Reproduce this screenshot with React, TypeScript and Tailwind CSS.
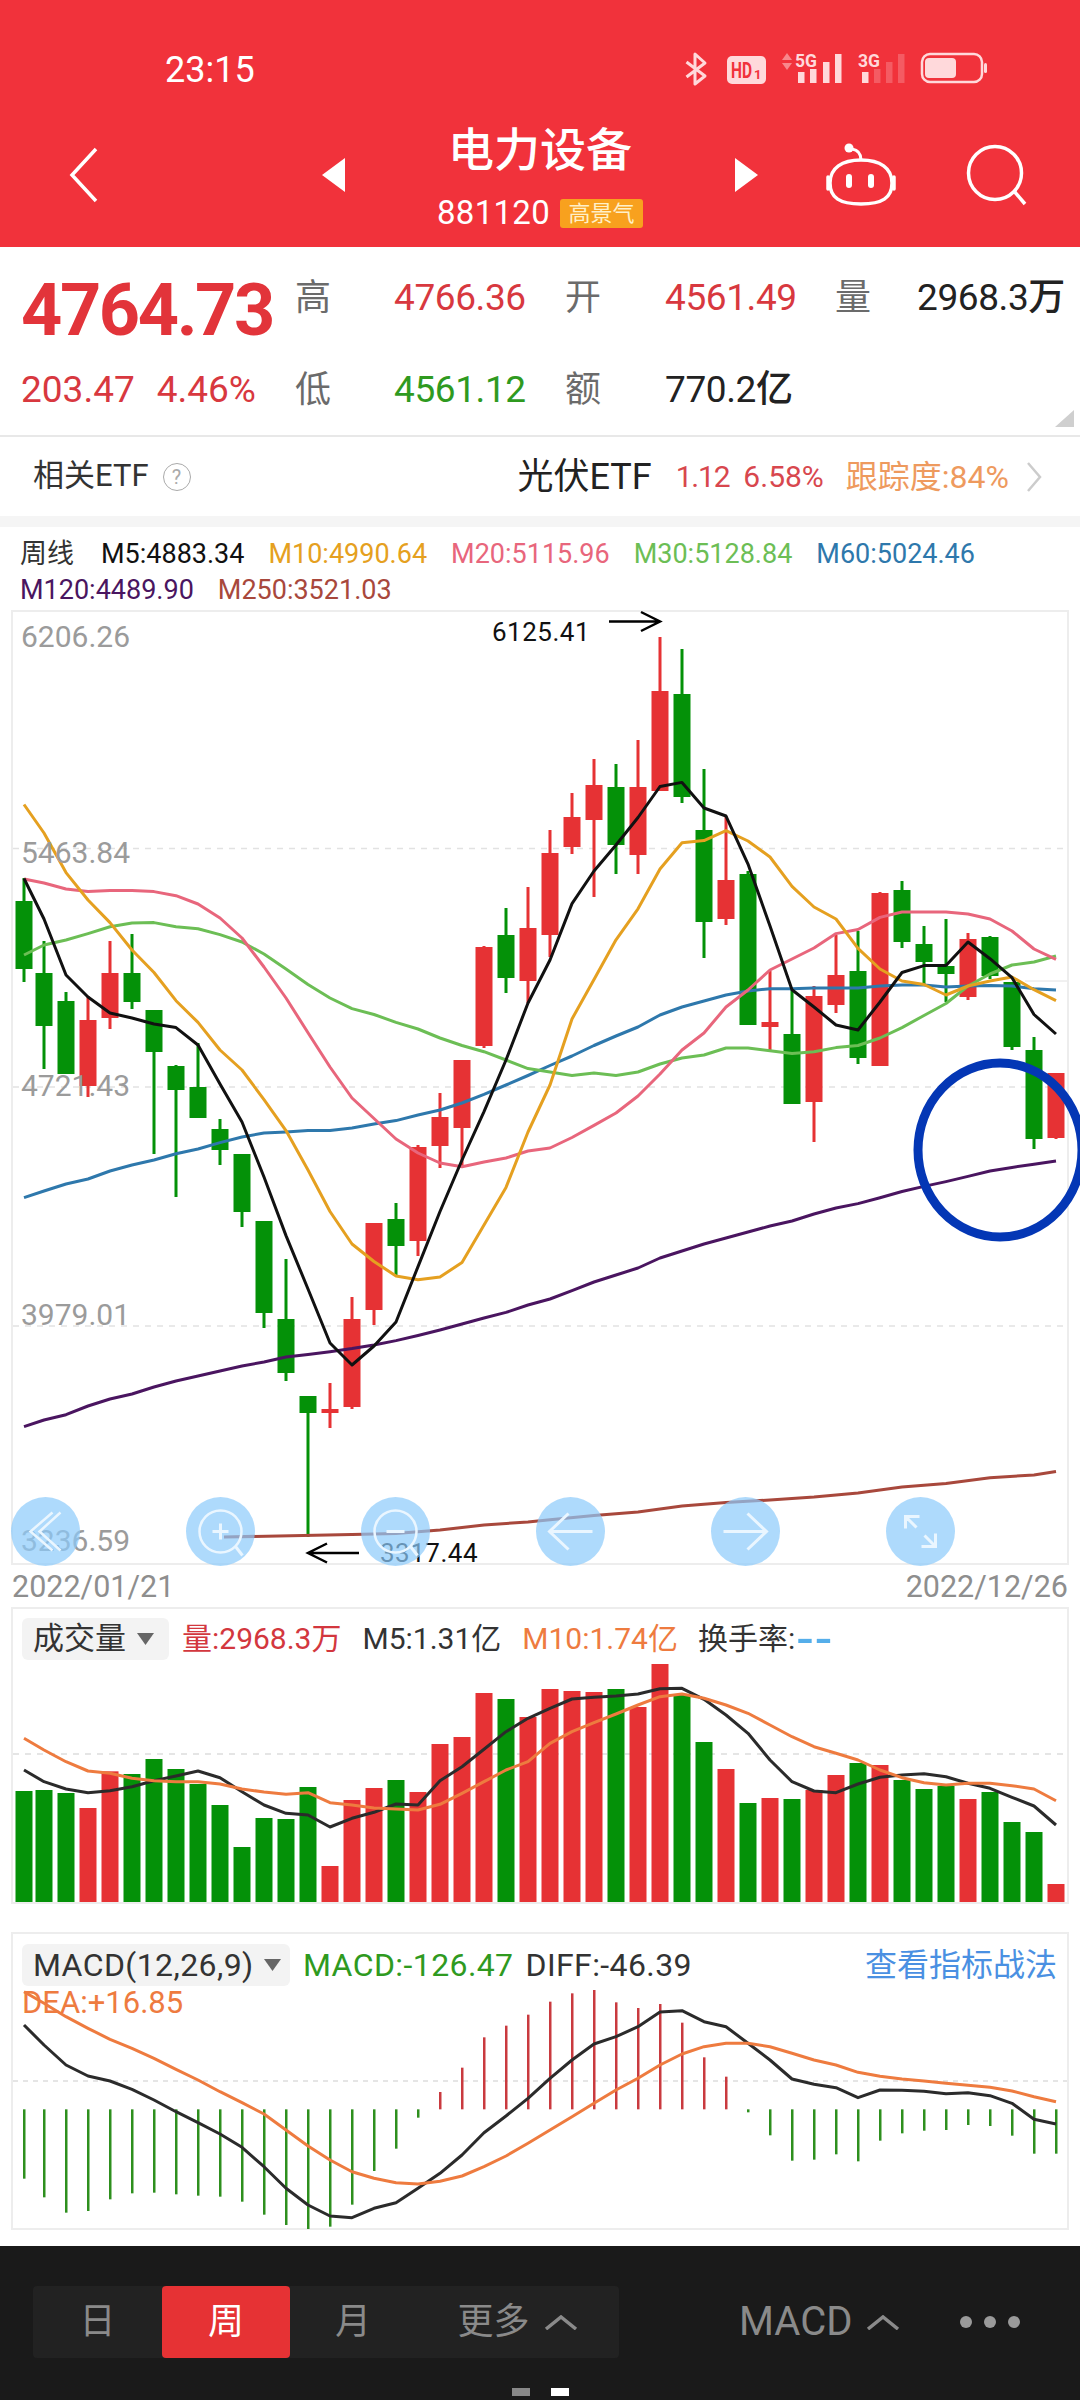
const RED = "#E63234";
const GREEN = "#049108";

const xAt = (i: number) => (i === 0 ? 24 : 44 + (i - 1) * 22);

// wick top, body top, body bottom, wick bottom, red?
const candles: [number, number, number, number, number][] = [
  [878, 901, 969, 982, 0], [941, 973, 1026, 1069, 0], [992, 1001, 1074, 1074, 0], [996, 1020, 1086, 1097, 1],
  [941, 973, 1018, 1029, 1], [934, 973, 1002, 1009, 0], [1010, 1010, 1052, 1154, 0], [1065, 1066, 1090, 1197, 0],
  [1043, 1087, 1118, 1118, 0], [1119, 1129, 1150, 1165, 0], [1154, 1154, 1212, 1227, 0], [1221, 1221, 1313, 1328, 0],
  [1259, 1319, 1373, 1381, 0], [1396, 1396, 1413, 1537, 0], [1383, 1409, 1413, 1428, 1], [1297, 1319, 1407, 1409, 1],
  [1223, 1223, 1310, 1325, 1], [1203, 1219, 1246, 1275, 0], [1145, 1147, 1241, 1256, 1], [1093, 1117, 1146, 1168, 1],
  [1060, 1060, 1128, 1166, 1], [946, 947, 1046, 1048, 1], [908, 935, 978, 993, 0], [887, 928, 981, 1003, 1],
  [830, 853, 935, 957, 1], [793, 817, 847, 854, 1], [759, 785, 820, 897, 1], [764, 787, 845, 874, 0],
  [740, 787, 855, 874, 1], [637, 691, 791, 791, 1], [649, 694, 797, 803, 0], [769, 830, 922, 958, 0],
  [816, 880, 919, 925, 1], [871, 874, 1025, 1025, 0], [971, 1022, 1027, 1052, 1], [988, 1034, 1104, 1104, 0],
  [986, 996, 1102, 1142, 1], [935, 975, 1005, 1013, 1], [931, 971, 1058, 1064, 0], [892, 893, 1066, 1066, 1],
  [881, 890, 942, 948, 0], [926, 944, 962, 985, 0], [919, 966, 974, 1002, 0], [933, 939, 997, 1000, 1],
  [936, 937, 976, 979, 0], [982, 982, 1047, 1050, 0], [1037, 1050, 1139, 1149, 0], [1073, 1073, 1138, 1139, 1],
];

const m5 = [878.5,919,975,997,1013,1018,1024,1027.6,1045,1084,1122,1177,1235.6,1289,1343,1365,1346,1322,1266.6,1211.5,1160,1111.6,1060,1003,960,903.6,871,845,817.5,786.5,782.4,808,816,864,926,989.7,1007,1025,1030,1002,972.5,965.6,965.6,942,958.7,977.7,1014.5,1034];
const m10 = [804.5,833,872.6,900,922.6,950,972.5,1000.7,1022.4,1050,1070,1099.6,1130.6,1170,1211.5,1244,1261.5,1276,1279.7,1277,1262.5,1225,1187.4,1132,1085,1019,979.4,939.8,908.8,869,842.7,840.6,830.6,841,857,886.4,907,919,948.4,969,981,984.5,995,986,981,977,989.7,1000.7];
const m20 = [879,883,889,891.6,890.5,890.5,891.6,895.7,904,918,938,967,998,1032.7,1067,1098,1118.5,1139,1153,1163,1166.7,1162,1158,1151,1148,1137.5,1125.4,1113,1096,1074,1050,1033,1007,990,970,959,948,933.6,929.5,917.4,912,912,912,914,919,931,949,959.4];
const m30 = [955,945,940,933.6,926.7,923,922.6,926.7,928.7,934.6,942,954,969,984.5,998,1008.6,1014.5,1022.4,1029,1038,1045.5,1051.7,1060,1068.6,1072,1075.5,1073,1075.5,1072,1064,1058,1055,1048,1048,1050.7,1053.4,1051.7,1047.6,1045.5,1038,1027.6,1015.5,1003.5,986,974,965,962,956];
const m60 = [1197.7,1191,1184,1179,1171,1165,1160,1153.7,1149,1142.6,1137,1133,1132,1130.6,1130.6,1128,1124,1120.6,1115,1110,1103,1094.4,1085,1075.5,1065.5,1056,1045.5,1036,1027,1015,1007,1001,995,991,988.7,988.7,988,988,988,986,985,985,987,986,985.5,986,988.7,990];
const m120 = [1426.7,1420,1414.7,1406,1399,1394,1387,1381,1376,1371,1366,1362,1357,1354.4,1351.7,1348.6,1345,1340.6,1335.5,1330,1324,1318,1312.4,1305,1299,1290.7,1282,1275,1268,1258,1251,1244,1238,1232,1226,1221,1214,1208,1203.6,1197.7,1191.5,1186.4,1181.6,1176.4,1171,1167.4,1164.3,1161];
const m250 = "224,1537 352,1534.5 396,1533.5 440,1530 484,1525 528,1522 550,1519.7 594,1515.6 638,1512 682,1506 726,1502.5 770,1500 814,1497 858,1493 902,1487 946,1483.6 990,1477.7 1034,1475 1056,1471.5";

// volume: bar top, red?
const volTops = [603,600,609,654,544,552,507,537,582,645,771,684,687,591,828,630,594,570,606,462,441,309,327,381,297,303,306,297,351,222,315,456,537,639,624,627,600,555,519,525,570,597,588,627,606,696,726,882];
const volRed = [0,0,0,1,1,0,0,0,0,0,0,0,0,0,1,1,1,0,1,1,1,1,0,1,1,1,1,0,1,1,0,0,1,0,1,0,1,1,0,1,0,0,0,1,0,0,0,1];
const volM5 = [540,575,597,608,602,590,572,558,543,563,605,645,670,675,711,685,667,642,645,572,530,478,425,385,355,327,322,318,312,296,295,328,375,430,510,575,603,608,582,562,555,551,560,580,595,622,648,705];
const volM10 = [445,480,515,543,550,565,572,575,575,582,597,606,613,608,638,645,654,657,660,643,610,575,540,515,460,425,398,372,345,320,312,325,345,370,405,440,470,490,510,540,563,578,585,580,580,587,597,632];

// macd bars end, diff and dea, measured from the panel crop
const macdBars = [806,862,908,903,868,850,848,853,857,860,875,914,945,957,950,884,783,716,623,546,473,382,347,314,275,250,240,277,294,282,338,442,500,607,676,752,749,733,754,692,670,662,660,645,648,677,731,731];
const diff = [345,405,465,498,513,538,570,605,638,672,712,770,835,885,918,923,895,878,835,790,735,668,618,565,505,450,402,380,350,306,302,335,350,400,450,507,523,533,563,540,541,544,551,548,557,580,628,642];
const dea = [245,280,320,355,388,415,445,478,510,545,578,612,660,708,750,785,805,818,822,814,798,770,738,700,660,620,580,540,505,465,432,410,400,400,410,430,450,465,487,499,507,513,520,526,532,543,560,575];

const pts = (ys: number[], f: (y: number) => number = (y) => y) =>
  ys.map((y, i) => `${xAt(i)},${f(y).toFixed(1)}`).join(" ");

function Line({ points, color, width = 3 }: { points: string; color: string; width?: number }) {
  return <polyline points={points} fill="none" stroke={color} strokeWidth={width} strokeLinejoin="round" />;
}

function Grid({ y }: { y: number }) {
  return <line x1={13} x2={1067} y1={y} y2={y} stroke="#E2E2E2" strokeWidth={1.5} strokeDasharray="6 6" />;
}

function StatusIcons() {
  const pale = "#FFD9DB";
  const bars = (x: number[], faded: boolean) =>
    x.map((bx, i) => (
      <rect key={bx} x={bx} y={[72, 69, 62, 54][i]} width={6.5} height={83 - [72, 69, 62, 54][i]} fill={pale} opacity={faded && i > 0 ? 0.25 : 1} />
    ));
  return (
    <svg width={320} height={40} viewBox="680 50 320 40" className="ml-auto mr-[80px]">
      <path d="M686.5 62 L705 76 L695 84 V54 L705 63 L686.5 77" fill="none" stroke={pale} strokeWidth={3} strokeLinejoin="round" />
      <rect x={727} y={56} width={39} height={28} rx={5} fill={pale} />
      <text x={731} y={78} fontSize={22} fontWeight={700} fill="#F1323B" textLength={21} lengthAdjust="spacingAndGlyphs">HD</text>
      <text x={754} y={79} fontSize={13} fontWeight={700} fill="#F1323B">1</text>
      <polygon points="782,60 792,60 787,53" fill="#F8878C" />
      <polygon points="782,63 792,63 787,70" fill="#F8878C" />
      <text x={795} y={67} fontSize={19} fontWeight={700} fill={pale} textLength={22} lengthAdjust="spacingAndGlyphs">5G</text>
      {bars([798, 810, 823, 835], false)}
      <text x={858} y={67} fontSize={19} fontWeight={700} fill={pale} textLength={22} lengthAdjust="spacingAndGlyphs">3G</text>
      {bars([862, 874, 886, 898], true)}
      <rect x={922} y={54} width={60} height={28} rx={8} fill="none" stroke={pale} strokeWidth={2.5} />
      <rect x={925} y={58} width={31} height={20} rx={4} fill={pale} />
      <rect x={984} y={63} width={3} height={10} rx={1.5} fill={pale} />
    </svg>
  );
}

function Triangle({ dir }: { dir: "left" | "right" }) {
  return (
    <svg width={23} height={34} viewBox="0 0 23 34" className="shrink-0">
      <polygon points={dir === "left" ? "23,0 0,17 23,34" : "0,0 23,17 0,34"} fill="#FFFFFF" />
    </svg>
  );
}

function Header() {
  return (
    <header className="h-[247px] shrink-0 bg-[#F1323B] text-white pt-[50px]">
      <div className="flex items-center h-[40px] pl-[165px]">
        <span className="text-[36px] leading-[40px]">23:15</span>
        <StatusIcons />
      </div>
      <div className="flex items-center h-[110px] mt-[30px] pl-[69px]">
        <svg width={29} height={56} viewBox="0 0 29 56" className="shrink-0">
          <polyline points="27,2 3,28 27,54" fill="none" stroke="#FFFFFF" strokeWidth={3.5} />
        </svg>
        <div className="ml-[224px] shrink-0">
          <Triangle dir="left" />
        </div>
        <div className="w-[390px] shrink-0 flex flex-col items-center">
          <h1 className="text-[46px] leading-[56px] font-medium">电力设备</h1>
          <div className="flex items-center gap-[10px] mt-[20px] h-[30px]">
            <span className="text-[33px] leading-[30px] tracking-[0.3px]">881120</span>
            <span className="w-[83px] h-[29px] rounded-[3px] bg-[#F8A11E] text-[#FFF0C8] text-[22px] leading-[29px] text-center">高景气</span>
          </div>
        </div>
        <Triangle dir="right" />
        <svg width={74} height={64} viewBox="0 0 74 64" className="ml-[66px] shrink-0">
          <path d="M37 17 C56 17 68 25 68 40 C68 55 58 61 37 61 C16 61 6 55 6 40 C6 25 18 17 37 17 Z" fill="none" stroke="#FFFFFF" strokeWidth={3.5} />
          <path d="M4 34 V46 M70 34 V46" stroke="#FFFFFF" strokeWidth={3.5} strokeLinecap="round" />
          <circle cx={25} cy={5} r={4.5} fill="#FFFFFF" />
          <path d="M28 6 C34 7 37 11 37 17" fill="none" stroke="#FFFFFF" strokeWidth={3} />
          <rect x={22} y={31} width={6} height={14} rx={3} fill="#FFFFFF" />
          <rect x={44} y={31} width={6} height={14} rx={3} fill="#FFFFFF" />
        </svg>
        <svg width={62} height={62} viewBox="0 0 62 62" className="ml-[68px] shrink-0">
          <circle cx={29} cy={29} r={26.5} fill="none" stroke="#FFFFFF" strokeWidth={3.5} />
          <line x1={48} y1={47} x2={59} y2={60} stroke="#FFFFFF" strokeWidth={3.5} />
        </svg>
      </div>
    </header>
  );
}

function Stats() {
  const label = "text-[36px] leading-[36px] text-[#6B6B6B]";
  const num = "text-[37px] leading-[36px] font-[450] tracking-[-0.4px]";
  return (
    <section className="relative h-[190px] shrink-0 border-b-2 border-[#E8E8E8] pl-[21px] pt-[33px]">
      <div className="grid grid-cols-[274px_99px_171px_100px_170px_82px_1fr] items-start">
        <span className="text-[72px] leading-[72px] font-bold tracking-[-2.4px] text-[#E2343A] -mt-[5px]">4764.73</span>
        <span className={label}>高</span>
        <span className={`${num} text-[#D8383F]`}>4766.36</span>
        <span className={label}>开</span>
        <span className={`${num} text-[#D8383F]`}>4561.49</span>
        <span className={label}>量</span>
        <span className={`${num} text-[#222222] whitespace-nowrap`}>2968.3万</span>
      </div>
      <div className="grid grid-cols-[274px_99px_171px_100px_170px] items-start mt-[25px]">
        <div className="flex gap-[22px] text-[37px] leading-[36px] font-[450] text-[#D8383F]">
          <span>203.47</span>
          <span>4.46%</span>
        </div>
        <span className={label}>低</span>
        <span className={`${num} text-[#2F9A1F]`}>4561.12</span>
        <span className={label}>额</span>
        <span className={`${num} text-[#222222] whitespace-nowrap`}>770.2亿</span>
      </div>
      <svg width={19} height={17} viewBox="0 0 19 17" className="absolute right-[6px] bottom-[8px]">
        <polygon points="19,0 19,17 0,17" fill="#CFCFCF" />
      </svg>
    </section>
  );
}

function EtfRow() {
  return (
    <section className="flex items-center h-[79px] shrink-0 pl-[33px] pr-[38px]">
      <span className="text-[31px] text-[#333333]">相关ETF</span>
      <span className="ml-[14px] size-[28px] rounded-full border border-[#AAAAAA] text-[20px] leading-[26px] text-center text-[#AAAAAA]">?</span>
      <span className="ml-auto text-[36px] text-[#222222]">光伏ETF</span>
      <span className="ml-[24px] text-[30px] tracking-[-1.2px] text-[#D8474E]">1.12</span>
      <span className="ml-[14px] text-[30px] text-[#D8474E]">6.58%</span>
      <span className="ml-[22px] text-[32px] text-[#EE9A5E]">跟踪度:84%</span>
      <svg width={16} height={30} viewBox="0 0 16 30" className="ml-[17px]">
        <polyline points="2,1 14,15 2,29" fill="none" stroke="#CCCCCC" strokeWidth={2.5} />
      </svg>
    </section>
  );
}

function Legend() {
  return (
    <div className="h-[83px] shrink-0 flex flex-wrap content-start gap-x-[24px] px-[20px] pt-[9px] text-[27px] leading-[36px]">
      <span className="text-[#333333] mr-[3px]">周线</span>
      <span className="text-[#111111]">M5:4883.34</span>
      <span className="text-[#E5A020]">M10:4990.64</span>
      <span className="text-[#E8667C]">M20:5115.96</span>
      <span className="text-[#6CBE55]">M30:5128.84</span>
      <span className="text-[#2E78AC]">M60:5024.46</span>
      <span className="text-[#4A1560]">M120:4489.90</span>
      <span className="text-[#A8483C]">M250:3521.03</span>
    </div>
  );
}

function Axis({ top, children }: { top: number; children: string }) {
  return (
    <span style={{ top }} className="absolute left-[8px] text-[30px] leading-[30px] text-[#9B9B9B]">
      {children}
    </span>
  );
}

function CircleButton({ children }: { children: React.ReactNode }) {
  return (
    <div className="size-[69px] rounded-full bg-[#8CCBFB]/70">
      <svg width={69} height={69} viewBox="-34.5 -34.5 69 69" fill="none" stroke="#EAF6FF" strokeWidth={2.5}>
        {children}
      </svg>
    </div>
  );
}

function MainChart() {
  return (
    <div className="relative h-[955px] shrink-0 mx-[11px] border-2 border-[#EDEDED]">
      <Axis top={10}>6206.26</Axis>
      <Axis top={226}>5463.84</Axis>
      <Axis top={459}>4721.43</Axis>
      <Axis top={688}>3979.01</Axis>
      <Axis top={914}>3236.59</Axis>
      <svg width={1054} height={951} viewBox="13 612 1054 951" className="block overflow-visible">
        <Grid y={848.5} />
        <Grid y={1087} />
        <Grid y={1326} />
        <line x1={1025} x2={1067} y1={981} y2={981} stroke="#E2E2E2" strokeWidth={1} />
        {candles.map(([wt, bt, bb, wb, red], i) => {
          const c = red ? RED : GREEN;
          return (
            <g key={i} fill={c}>
              <rect x={xAt(i) - 1.5} y={wt} width={3} height={wb - wt} />
              <rect x={xAt(i) - 8.5} y={bt} width={17} height={bb - bt} />
            </g>
          );
        })}
        <polyline points={m250} fill="none" stroke="#A8483C" strokeWidth={3} />
        <Line points={pts(m120)} color="#4A1560" />
        <Line points={pts(m60)} color="#2E78AC" />
        <Line points={pts(m30)} color="#6CBE55" />
        <Line points={pts(m20)} color="#E8667C" />
        <Line points={pts(m10)} color="#E5A020" />
        <Line points={pts(m5)} color="#111111" />
        <g fill="none" stroke="#000000" strokeWidth={2.5}>
          <path d="M609 621.5 H659 M641 612 L660 621.5 L641 631" />
          <path d="M359 1553 H309 M327 1543.5 L308 1553 L327 1562.5" />
        </g>
        <ellipse cx={1000} cy={1150} rx={82} ry={87} fill="none" stroke="#0437B5" strokeWidth={9} />
      </svg>
      <span className="absolute left-[479px] top-[5px] text-[26px] leading-[30px] tracking-[0.5px] text-[#111111]">6125.41</span>
      <span className="absolute left-[367px] top-[926px] text-[26px] leading-[30px] tracking-[0.5px] text-[#111111]">3317.44</span>
      <div className="absolute -left-[2px] top-[885px] flex gap-[106px]">
        <CircleButton>
          <path d="M7 -19 L-15 0 L7 19 M15 -19 L-6 0 L15 19" />
        </CircleButton>
        <CircleButton>
          <circle r={21} />
          <path d="M15 15 L22 24" strokeWidth={3} />
          <path d="M-8 0 H8 M0 -8 V8" strokeWidth={3} />
        </CircleButton>
        <CircleButton>
          <circle r={21} />
          <path d="M15 15 L22 24" strokeWidth={3} />
          <path d="M-9 0 H9" strokeWidth={3} />
        </CircleButton>
        <CircleButton>
          <path d="M-21 0 H22 M-2 -18 L-21 0 L-2 18" strokeWidth={3} />
        </CircleButton>
        <CircleButton>
          <path d="M-22 0 H21 M2 -18 L21 0 L2 18" strokeWidth={3} />
        </CircleButton>
        <CircleButton>
          <path d="M-15 -3 V-15 H-1 M-15 -15 L-4 -4 M15 2 V15 H1 M15 15 L4 4" strokeWidth={3} />
        </CircleButton>
      </div>
    </div>
  );
}

function VolumeChart() {
  const toY = (z: number) => 1590 + z / 3;
  return (
    <div className="relative h-[297px] shrink-0 mx-[11px] border-2 border-[#EDEDED]">
      <svg width={1054} height={293} viewBox="13 1609 1054 293" className="absolute inset-0 overflow-visible">
        <line x1={13} x2={1067} y1={1754} y2={1754} stroke="#DDDDDD" strokeWidth={1.5} strokeDasharray="6 6" />
        {volTops.map((t, i) => (
          <rect key={i} x={xAt(i) - 8.5} y={toY(t)} width={17} height={1902 - toY(t)} fill={volRed[i] ? RED : GREEN} />
        ))}
        <Line points={pts(volM5, toY)} color="#2B2B2B" />
        <Line points={pts(volM10, toY)} color="#EE7B3F" />
      </svg>
      <div className="relative flex items-center pl-[9px] pt-[9px] text-[30px] leading-[42px] whitespace-nowrap">
        <div className="flex items-center w-[147px] h-[42px] pl-[11px] rounded-[6px] bg-[#F3F3F3] text-[#333333] text-[31px]">
          成交量
          <svg width={17} height={12} viewBox="0 0 17 12" className="ml-[11px]">
            <polygon points="0,0 17,0 8.5,12" fill="#666666" />
          </svg>
        </div>
        <span className="ml-[13px] text-[#D3373E]">量:2968.3万</span>
        <span className="ml-[21px] text-[#333333]">M5:1.31亿</span>
        <span className="ml-[21px] text-[#EE7B3F]">M10:1.74亿</span>
        <span className="ml-[20px] text-[#333333]">换手率:</span>
        <span className="ml-[2px] text-[56px] leading-[42px] text-[#55AEEA] tracking-[3px]">--</span>
      </div>
    </div>
  );
}

function MacdChart() {
  const toY = (z: number) => 1910 + z / 3;
  const zero = toY(598);
  return (
    <div className="relative h-[298px] shrink-0 mt-[28px] mx-[11px] border-2 border-[#EDEDED]">
      <svg width={1054} height={294} viewBox="13 1934 1054 294" className="absolute inset-0 overflow-visible">
        <line x1={13} x2={1067} y1={2081} y2={2081} stroke="#DDDDDD" strokeWidth={1.5} strokeDasharray="5 5" />
        {macdBars.map((z, i) => {
          const y = toY(z);
          return <rect key={i} x={xAt(i) - 1} y={Math.min(y, zero)} width={2.5} height={Math.abs(y - zero)} fill={i >= 19 && i <= 32 ? "#C93A3F" : "#2E8F1E"} />;
        })}
        <Line points={pts(diff, toY)} color="#2B2B2B" />
        <Line points={pts(dea, toY)} color="#EE7B3F" />
      </svg>
      <div className="relative pl-[9px] pt-[10px] pr-[10px] text-[31px] leading-[42px] whitespace-nowrap">
        <div className="flex items-center text-[32px] tracking-[0.4px]">
          <div className="flex items-center w-[268px] h-[42px] pl-[11px] rounded-[6px] bg-[#F3F3F3] text-[#333333]">
            MACD(12,26,9)
            <svg width={17} height={12} viewBox="0 0 17 12" className="ml-[10px]">
              <polygon points="0,0 17,0 8.5,12" fill="#666666" />
            </svg>
          </div>
          <span className="ml-[13px] text-[#2F9A1F]">MACD:-126.47</span>
          <span className="ml-[12px] text-[#333333]">DIFF:-46.39</span>
          <span className="ml-auto tracking-normal text-[#4A90E2]">查看指标战法</span>
        </div>
        <div className="text-[#EE7B3F] leading-[30px] mt-[2px]">DEA:+16.85</div>
      </div>
    </div>
  );
}

function Caret({ className }: { className?: string }) {
  return (
    <svg width={34} height={15} viewBox="0 0 34 15" className={className}>
      <polyline points="2,14 17,2 32,14" fill="none" stroke="#8A8A8A" strokeWidth={3.5} />
    </svg>
  );
}

function BottomBar() {
  return (
    <footer className="h-[154px] shrink-0 bg-[#1A1A1A] pt-[40px] text-[#8A8A8A] text-[36px]">
      <div className="flex items-center h-[72px]">
        <div className="flex items-center w-[586px] h-[72px] ml-[33px] rounded-[4px] bg-[#222222] text-center">
          <span className="w-[129px]">日</span>
          <span className="w-[128px] h-[72px] leading-[72px] rounded-[4px] bg-[#E63234] text-white">周</span>
          <span className="w-[126px]">月</span>
          <span className="flex items-center justify-center w-[203px] gap-[14px]">
            更多
            <Caret />
          </span>
        </div>
        <span className="ml-[120px] text-[40px]">MACD</span>
        <Caret className="ml-[14px]" />
        <div className="flex gap-[12px] ml-[60px]">
          <span className="size-[12px] rounded-full bg-[#9A9A9A]" />
          <span className="size-[12px] rounded-full bg-[#9A9A9A]" />
          <span className="size-[12px] rounded-full bg-[#9A9A9A]" />
        </div>
      </div>
      <div className="flex justify-center gap-[21px] mt-[30px]">
        <span className="w-[18px] h-[8px] bg-[#888888]" />
        <span className="w-[18px] h-[8px] bg-white" />
      </div>
    </footer>
  );
}

export default function App() {
  return (
    <main className="w-[1080px] h-[2400px] flex flex-col bg-white overflow-hidden font-[Roboto,'Noto_Sans_CJK_SC',sans-serif]">
      <Header />
      <Stats />
      <EtfRow />
      <div className="h-[11px] shrink-0 bg-[#F5F5F5]" />
      <Legend />
      <MainChart />
      <div className="flex justify-between h-[42px] shrink-0 px-[12px] text-[30.5px] leading-[44px] text-[#8E8E8E]">
        <span>2022/01/21</span>
        <span>2022/12/26</span>
      </div>
      <VolumeChart />
      <MacdChart />
      <div className="flex-1" />
      <BottomBar />
    </main>
  );
}
